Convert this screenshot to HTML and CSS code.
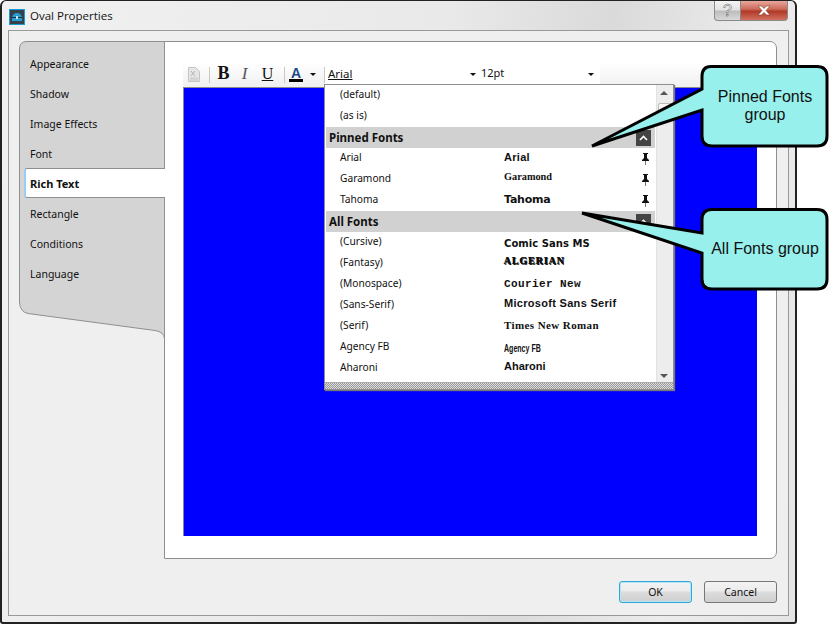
FILE: index.html
```html
<!DOCTYPE html>
<html lang="en">
<head>
<meta charset="utf-8">
<title>Oval Properties</title>
<link rel="stylesheet" href="styles.css">
</head>
<body>
<div class="window">
  <div class="titlebar">
    <svg class="appicon" width="16" height="16" viewBox="0 0 16 16">
      <rect width="16" height="16" fill="#1c9ad6"/>
      <rect x="1" y="1" width="14" height="14" fill="#33424c"/>
      <path d="M3 9a5 5 0 0 1 10 0v3H3z" fill="#2b9ccf"/>
      <rect x="3" y="8" width="10" height="1" fill="#12303e"/>
      <rect x="7" y="7" width="2" height="3" fill="#bfe6f5"/>
    </svg>
    <span class="title">Oval Properties</span>
    <div class="winbtns">
      <div class="winbtn help">?</div>
      <div class="winbtn close">
        <svg width="14" height="11" viewBox="0 0 14 11"><path d="M1 1h3.500L7 3.500 9.500 1H13L9 5.500 13 10H9.500L7 7.500 4.500 10H1l4-4.500z" fill="#fff" stroke="#7a3a30" stroke-width=".6"/></svg>
      </div>
    </div>
  </div>

  <div class="frame">
    <div class="panel">
      <div class="nav">
        <svg class="navshape" width="146" height="298" viewBox="0 0 146 298">
          <path d="M.5 8Q.5.500 8 .500H145.500V297.500Q145 291 136 289.500L9 272.500Q1 271 .5 261Z" fill="#d4d4d4" stroke="#8f8f8f"/>
        </svg>
        <div class="tab">Appearance</div>
        <div class="tab">Shadow</div>
        <div class="tab">Image Effects</div>
        <div class="tab">Font</div>
        <div class="tab active">Rich Text</div>
        <div class="tab">Rectangle</div>
        <div class="tab">Conditions</div>
        <div class="tab">Language</div>
      </div>

      <div class="content">
        <div class="toolbar">
          <svg class="tool doc" width="14" height="17" viewBox="0 0 14 17">
            <path d="M1.500 1.500h7l4 4v10h-11z" fill="#e6e6e6" stroke="#c4c4c4"/>
            <path d="M4 5l4 5M8 5l-4 5" stroke="#b5b5b5"/>
            <path d="M3 12h8M3 14h8" stroke="#c4c4c4"/>
          </svg>
          <i class="sep"></i>
          <span class="fmt bold">B</span>
          <span class="fmt ital">I</span>
          <span class="fmt under">U</span>
          <i class="sep sep2"></i>
          <span class="fmt color">A</span>
          <i class="caret small"></i>
          <i class="sep sep3"></i>
          <div class="combo fontbox"><u>Arial</u><i class="caret"></i></div>
          <div class="combo sizebox"><span>12pt</span><i class="caret"></i></div>
        </div>
        <div class="editor"></div>

        <div class="menu">
          <div class="menubody">
            <div class="list">
              <div class="row"><span class="name">(default)</span></div>
              <div class="row"><span class="name">(as is)</span></div>
              <div class="grouphead">Pinned Fonts<span class="fold"><svg width="9" height="6" viewBox="0 0 9 6"><path d="M1 5l3.500-3.500L8 5" fill="none" stroke="#fff" stroke-width="1.600"/></svg></span></div>
              <div class="row"><span class="name">Arial</span><span class="sample s-arial">Arial</span><svg class="pin" width="9" height="12" viewBox="0 0 9 12"><path d="M2 0h5v1H6v4l2 2v1H1V7l2-2V1H2z" fill="#111"/><rect x="4" y="8" width="1" height="4" fill="#777"/></svg></div>
              <div class="row"><span class="name">Garamond</span><span class="sample s-garamond">Garamond</span><svg class="pin" width="9" height="12" viewBox="0 0 9 12"><path d="M2 0h5v1H6v4l2 2v1H1V7l2-2V1H2z" fill="#111"/><rect x="4" y="8" width="1" height="4" fill="#777"/></svg></div>
              <div class="row"><span class="name">Tahoma</span><span class="sample s-tahoma">Tahoma</span><svg class="pin" width="9" height="12" viewBox="0 0 9 12"><path d="M2 0h5v1H6v4l2 2v1H1V7l2-2V1H2z" fill="#111"/><rect x="4" y="8" width="1" height="4" fill="#777"/></svg></div>
              <div class="grouphead">All Fonts<span class="fold"><svg width="9" height="6" viewBox="0 0 9 6"><path d="M1 5l3.500-3.500L8 5" fill="none" stroke="#fff" stroke-width="1.600"/></svg></span></div>
              <div class="row"><span class="name">(Cursive)</span><span class="sample s-comic">Comic Sans MS</span></div>
              <div class="row"><span class="name">(Fantasy)</span><span class="sample s-algerian">ALGERIAN</span></div>
              <div class="row"><span class="name">(Monospace)</span><span class="sample s-courier">Courier New</span></div>
              <div class="row"><span class="name">(Sans-Serif)</span><span class="sample s-mssans">Microsoft Sans Serif</span></div>
              <div class="row"><span class="name">(Serif)</span><span class="sample s-times">Times New Roman</span></div>
              <div class="row"><span class="name">Agency FB</span><span class="sample s-agency">Agency FB</span></div>
              <div class="row"><span class="name">Aharoni</span><span class="sample s-aharoni">Aharoni</span></div>
            </div>
            <div class="scrollbar">
              <i class="arrow up"></i>
              <div class="thumb"></div>
              <i class="arrow down"></i>
            </div>
          </div>
          <div class="grip"></div>
        </div>
      </div>
    </div>

    <div class="footer">
      <button class="btn default">OK</button>
      <button class="btn">Cancel</button>
    </div>
  </div>
</div>

<div class="callout c-pinned">
  <svg width="245" height="84" viewBox="0 0 245 84">
    <path d="M125 1.500H231Q241 1.500 241 11.500V71Q241 81 231 81H126Q116 81 116 71V45L6 81 116 24V11.500Q116 1.500 125 1.500Z" fill="#98f0ec" stroke="#000" stroke-width="3"/>
  </svg>
  <span class="calloutlabel">Pinned Fonts<br>group</span>
</div>
<div class="callout c-all">
  <svg width="254" height="84" viewBox="0 0 254 84">
    <path d="M135 1.500H240Q250 1.500 250 11.500V71Q250 81 240 81H135Q125 81 125 71V45L5 5 125 25V11.500Q125 1.500 135 1.500Z" fill="#98f0ec" stroke="#000" stroke-width="3"/>
  </svg>
  <span class="calloutlabel">All Fonts group</span>
</div>
</body>
</html>
```

FILE: styles.css
```css
*{box-sizing:border-box;}
html,body{margin:0;padding:0;}
body{width:840px;height:624px;background:#fff;font-family:"Noto Sans","Liberation Sans",sans-serif;font-size:10.500px;color:#111;position:relative;overflow:hidden;}

.window{width:797px;height:624px;border:2px solid #222;border-top-width:1px;border-radius:6px 6px 3px 3px;background:linear-gradient(100deg,#f1f1f1 0%,#e9e9e9 50%,#dadada 68%,#ececec 85%,#e4e4e4 100%);display:flex;flex-direction:column;padding:0 6px 6px;}

.titlebar{height:29px;display:flex;align-items:center;flex:none;}
.appicon{margin:2px 0 0 1px;}
.title{margin-left:5px;font-family:"Open Sans","Noto Sans",sans-serif;font-size:11.500px;color:#111;}
.winbtns{margin:0 1px 0 auto;align-self:flex-start;display:flex;}
.winbtn{height:20px;display:flex;align-items:center;justify-content:center;border:1px solid #8a8a8a;border-top:0;}
.help{width:27px;border-radius:0 0 0 4px;background:linear-gradient(#f4f4f4 0,#e3e3e3 45%,#bdbdbd 55%,#d8d8d8 100%);color:#fff;-webkit-text-stroke:.5px #555;font:16px "Liberation Sans",sans-serif;}
.close{width:47px;border-left:0;border-radius:0 0 4px 0;background:linear-gradient(#e8a89c 0,#cf6f5f 40%,#b23a28 55%,#d2705f 100%);}

.frame{flex:1;border:1px solid #999;background:#efefef;padding:10px 11px 11px 10px;display:flex;flex-direction:column;min-height:0;}
.panel{height:518px;display:flex;flex:none;}

.nav{width:145px;flex:none;position:relative;padding-top:8px;}
.navshape{position:absolute;left:0;top:0;}
.tab{position:relative;height:30px;line-height:30px;padding-left:11px;}
.tab.active{height:30px;margin:-1px -1px 1px 5px;padding-left:4px;line-height:29px;background:#fff;border:1px solid #8f8f8f;border-right:0;border-left:2px solid #9accf5;border-radius:3px 0 0 3px;font-weight:bold;font-size:11px;z-index:2;}

.content{flex:1;background:#fff;border:1px solid #8f8f8f;border-radius:0 7px 7px 0;padding:20px 19px 22px 18px;display:flex;flex-direction:column;position:relative;}

.toolbar{height:25px;flex:none;display:flex;align-items:center;background:linear-gradient(#fff,#f0f0f0);}
.tool.doc{margin-left:4px;}
.sep{width:1px;height:16px;background:#c8c8c8;margin-left:8px;}
.sep2{margin-left:10px;}
.sep3{margin-left:8px;}
.fmt{font-family:"Liberation Serif",serif;font-size:16px;color:#111;display:block;width:13px;text-align:center;margin-top:-2px;}
.bold{font-weight:bold;font-size:18px;margin-left:7px;}
.ital{font-style:italic;font-size:17px;margin-left:8px;color:#555;}
.under{text-decoration:underline;margin-left:10px;}
.color{width:14px;font-family:"Liberation Sans",sans-serif;font-weight:bold;font-size:14px;color:#1a4a8a;border-bottom:3px solid #000;line-height:12px;margin-left:4px;margin-top:0;}
.caret{width:0;height:0;border:3px solid transparent;border-top:3px solid #111;border-bottom:0;display:block;flex:none;}
.caret.small{margin-left:7px;}
.combo{height:22px;display:flex;align-items:center;background:#fff;margin-top:-1px;}
.fontbox{width:154px;padding:0 2px 0 3px;justify-content:space-between;}
.fontbox u{font-family:"Noto Sans",sans-serif;font-size:11.500px;color:#111;margin-top:-1px;}
.sizebox{width:121px;padding:0 6px 0 2px;justify-content:space-between;font-size:11px;}
.sizebox span{margin-top:-3px;}
.fontbox .caret{margin-right:1px;}

.editor{flex:1;background:#00f;border:solid #8a8a8a;border-width:1px 0 0 1px;}

.menu{position:absolute;left:159px;top:42px;width:350px;height:306px;background:#fff;border:1px solid #8f8f8f;box-shadow:1px 1px 1px #777;display:flex;flex-direction:column;}
.menubody{display:flex;flex:1;min-height:0;}
.list{width:330px;flex:none;}
.row{height:21px;display:flex;align-items:center;padding-left:15px;position:relative;}
.name{width:164px;flex:none;margin-bottom:4px;font-size:10.200px;}
.sample{color:#111;white-space:nowrap;font-weight:bold;}
.pin{position:absolute;left:316px;top:5px;}
.grouphead{height:21px;margin-left:1px;padding-left:3px;background:#d1d1d1;display:flex;align-items:center;justify-content:space-between;font-weight:bold;font-size:11.500px;color:#111;}
.fold{width:15px;height:16px;background:#444;margin-right:4px;display:flex;align-items:center;justify-content:center;}

.s-arial{font:bold 11px "Liberation Sans",sans-serif;letter-spacing:.3px;margin-bottom:3px;}
.s-garamond{font:bold 10.300px "Liberation Serif",serif;margin-bottom:7px;}
.s-tahoma{font:bold 11px "DejaVu Sans",sans-serif;letter-spacing:-.2px;margin-bottom:3px;}
.s-comic{font:bold 10px "DejaVu Sans",sans-serif;letter-spacing:.05px;margin-top:1px;}
.s-algerian{font:bold 10px "Liberation Serif",serif;letter-spacing:.9px;margin-bottom:7px;text-shadow:.6px .6px 0 #111,-.4px 0 0 #111;}
.s-courier{font:bold 11px "Liberation Mono",monospace;letter-spacing:.4px;margin-bottom:2px;}
.s-mssans{font:bold 11px "Liberation Sans",sans-serif;letter-spacing:.3px;margin-bottom:6px;}
.s-times{font:bold 11px "Liberation Serif",serif;letter-spacing:.4px;margin-bottom:4px;}
.s-agency{font:bold 11px "Liberation Sans",sans-serif;transform:scaleX(.64);transform-origin:left;margin-top:1px;}
.s-aharoni{font:bold 11px "Liberation Sans",sans-serif;margin-bottom:6px;}

.scrollbar{width:17px;margin-left:1px;background:#ededed;border-left:1px solid #e2e2e2;position:relative;}
.arrow{position:absolute;left:3px;width:0;height:0;border:4px solid transparent;}
.arrow.up{top:6px;border-top:0;border-bottom:4px solid #555;}
.arrow.down{bottom:4px;border-bottom:0;border-top:4px solid #555;}
.thumb{position:absolute;left:1px;top:18px;width:14px;height:16px;background:#f8f8f8;border:1px solid #bbb;border-radius:2px;}
.grip{height:7px;flex:none;border-top:1px solid #aaa;background:repeating-conic-gradient(#999 0 25%,#ddd 0 50%) 0 0/2px 2px;}

.footer{flex:1;display:flex;justify-content:flex-end;align-items:flex-start;gap:12px;padding-top:22px;}
.btn{width:73px;height:22px;padding:0;border:1px solid #777;border-radius:3px;background:linear-gradient(#f3f3f3 0,#ececec 45%,#dcdcdc 50%,#cfcfcf 100%);font-family:"Noto Sans",sans-serif;font-size:10.500px;color:#111;}
.btn.default{border:1px solid #2fa8d8;box-shadow:inset 0 0 0 1px #b5e6f7;}

.callout{position:absolute;}
.callout svg{display:block;}
.c-pinned{left:586px;top:65px;}
.c-all{left:577px;top:208px;}
.calloutlabel{position:absolute;text-align:center;font-family:"Liberation Sans",sans-serif;font-size:16px;line-height:18px;color:#111;white-space:nowrap;}
.c-pinned .calloutlabel{left:116px;width:126px;top:23px;}
.c-all .calloutlabel{left:125px;width:126px;top:32px;}
```
